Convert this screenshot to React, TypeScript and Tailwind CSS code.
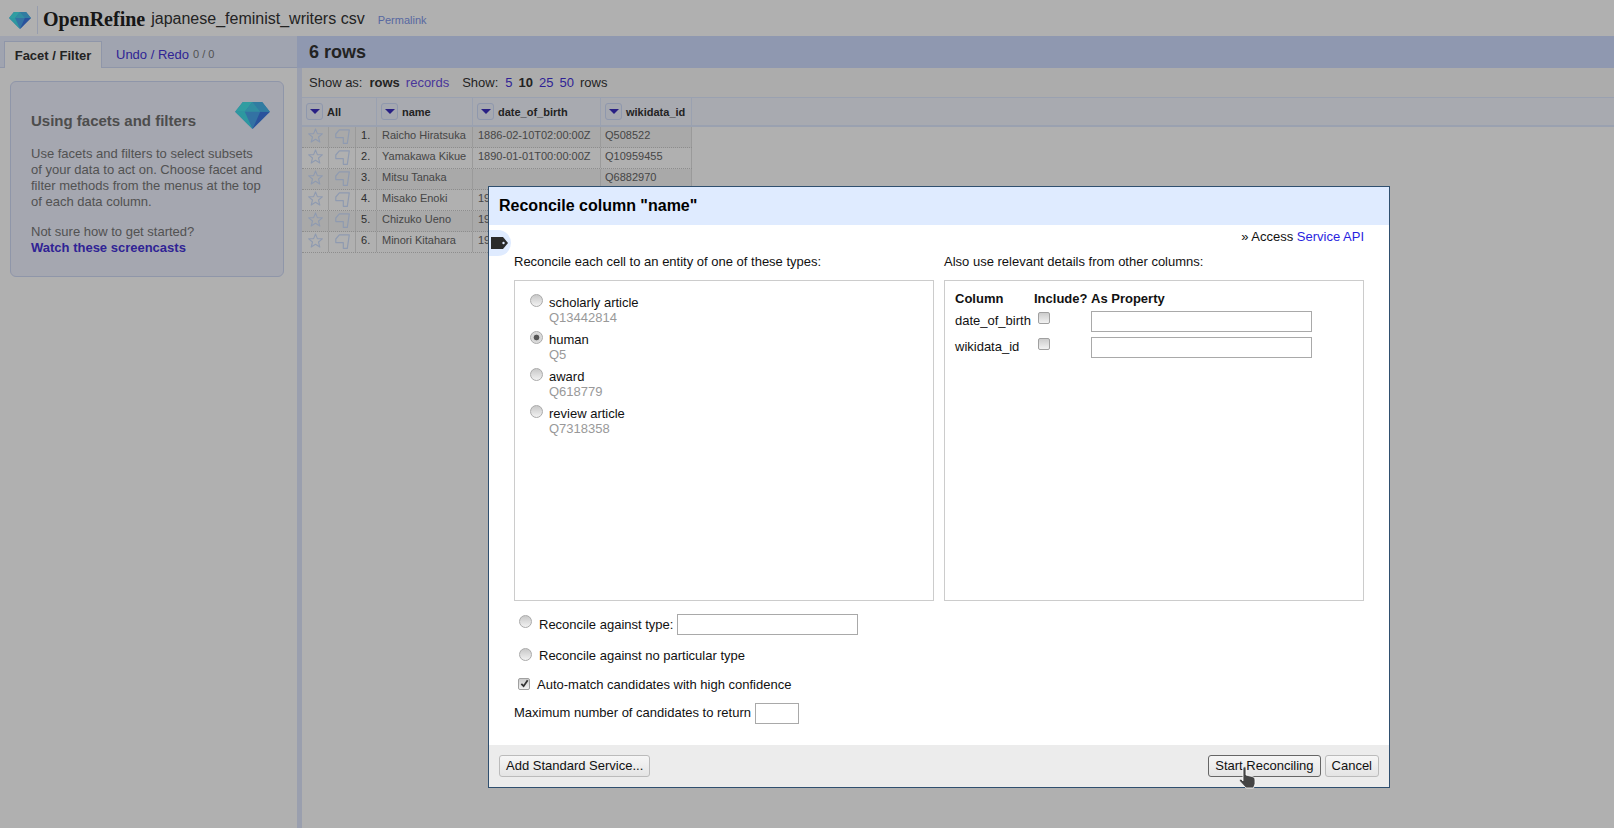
import React from "react";

const font = { fontFamily: '"Liberation Sans", Arial, sans-serif' };

const rows = [
  { name: "Raicho Hiratsuka", date: "1886-02-10T02:00:00Z", id: "Q508522" },
  { name: "Yamakawa Kikue", date: "1890-01-01T00:00:00Z", id: "Q10959455" },
  { name: "Mitsu Tanaka", date: "", id: "Q6882970" },
  { name: "Misako Enoki", date: "19", id: "" },
  { name: "Chizuko Ueno", date: "19", id: "" },
  { name: "Minori Kitahara", date: "19", id: "" },
];

const types = [
  { name: "scholarly article", id: "Q13442814", checked: false },
  { name: "human", id: "Q5", checked: true },
  { name: "award", id: "Q618779", checked: false },
  { name: "review article", id: "Q7318358", checked: false },
];

const Gem = ({ className }: { className: string }) => (
  <svg viewBox="0 0 36 28" className={className}>
    <polygon points="8,0 28,0 36,10 18,28 0,10" fill="#4aa6ec" />
    <polygon points="0,10 10,10 18,28" fill="#42dce8" />
    <polygon points="26,10 36,10 18,28" fill="#3d78e2" />
    <polygon points="8,0 18,0 10,10 0,10" fill="#46e4ea" />
    <polygon points="18,0 28,0 36,10 26,10" fill="#48b4ea" />
    <polygon points="18,0 26,10 10,10" fill="#48cdea" />
  </svg>
);

const Star = () => (
  <svg viewBox="0 0 16 16" className="h-[15px] w-[15px]" fill="none" stroke="#cfe0ff" strokeWidth="1.2" strokeLinejoin="round">
    <polygon points="8,1 10,6 15.3,6.2 11.2,9.6 12.6,15 8,12 3.4,15 4.8,9.6 0.7,6.2 6,6" />
  </svg>
);

const Flag = () => (
  <svg viewBox="0 0 15 15" className="h-[15px] w-[15px]" fill="none" stroke="#cfe0ff" strokeWidth="1.2" strokeLinejoin="round">
    <path d="M0.8 5 L4.3 0.8 H14.3 L12.3 14.3 H8.3 V8.6 H0.8 Z" />
  </svg>
);

const Drop = () => (
  <span className="flex h-[17px] w-[17px] shrink-0 items-center justify-center rounded-[3px] border border-[#cfdcfb] bg-[#f0f3ff]">
    <span className="h-0 w-0 border-x-[5px] border-t-[5px] border-x-transparent border-t-[#3a2fc0]" />
  </span>
);

const Radio = ({ checked = false }: { checked?: boolean }) => (
  <input
    type="radio"
    readOnly
    checked={checked}
    className="h-[13px] w-[13px] shrink-0 appearance-none rounded-full border border-[#aaa] bg-gradient-to-b from-[#c8c8c8] to-[#f2f2f2] checked:bg-[radial-gradient(circle,#555_0,#555_2.5px,#d4d4d4_3.2px,#e8e8e8_100%)]"
  />
);

const Check = () => (
  <input
    type="checkbox"
    readOnly
    className="block h-[12px] w-[12px] appearance-none rounded-[2px] border border-[#a0a0a0] bg-gradient-to-b from-[#cccccc] to-[#f2f2f2]"
  />
);

const Btn = ({ label, active }: { label: string; active?: boolean }) => (
  <button
    className={`h-[22px] rounded-[3px] border bg-gradient-to-b from-[#f6f6f6] to-[#e4e4e4] px-[6px] text-[13px] leading-4 text-[#111] ${
      active ? "border-[#666]" : "border-[#bbb]"
    }`}
  >
    {label}
  </button>
);

const App = () => {
  return (
    <div className="relative h-[828px] w-[1614px] overflow-hidden bg-white text-[13px] text-black" style={font}>
      <header className="flex h-9 items-center pt-[2px]">
        <Gem className="ml-[9px] mt-[3px] h-[17px] w-[22px]" />
        <div className="ml-[6px] mt-[2px] h-7 w-px bg-[#dbe4fb]" />
        <span
          className="ml-[5px] text-[20px] font-bold leading-none text-[#222]"
          style={{ fontFamily: '"Liberation Serif", serif' }}
        >
          OpenRefine
        </span>
        <span className="ml-[6px] text-[16px] text-[#333]">japanese_feminist_writers csv</span>
        <a className="ml-[13px] mt-[2px] text-[11px] text-[#7f97ea]">Permalink</a>
      </header>

      <div className="flex h-[792px]">
        <aside className="w-[297px] shrink-0">
          <div className="flex h-8 items-end border-b border-[#cfd9f5] bg-[#e8eeff] pl-1">
            <div className="relative top-px flex h-[27px] w-[98px] items-center justify-center border border-b-0 border-[#cfd9f5] bg-white pt-px font-bold text-[#333]">
              Facet / Filter
            </div>
            <div className="ml-[14px] flex h-[26px] items-center pt-px text-[#4633d8]">
              Undo / Redo<span className="ml-1 text-[11px] text-[#777]">0 / 0</span>
            </div>
          </div>
          <div className="ml-[10px] mt-[13px] h-[196px] w-[274px] rounded-md border border-[#cfd9f5] bg-[#eff2ff] pl-[20px] pr-[10px] text-[#777]">
            <div className="flex items-start justify-between pr-[3px] pt-[20px]">
              <h2 className="mt-[10px] text-[15px] font-bold leading-[18px] text-[#707070]">Using facets and filters</h2>
              <Gem className="h-[27px] w-[35px]" />
            </div>
            <p className="mt-[16px] leading-4">
              Use facets and filters to select subsets
              <br />
              of your data to act on. Choose facet and
              <br />
              filter methods from the menus at the top
              <br />
              of each data column.
            </p>
            <p className="mt-[14px] leading-4">Not sure how to get started?</p>
            <a className="block font-bold leading-4 text-[#4633d8]">Watch these screencasts</a>
          </div>
        </aside>

        <main className="flex-1 border-l-[5px] border-[#dfe7fd]">
          <div className="-ml-[5px] flex h-8 items-center bg-[#cfdcff] pl-[12px] pt-px text-[18px] font-bold text-[#333]">6 rows</div>
          <div className="flex h-[29px] items-center bg-[#fafafa] pl-[7px] pt-px text-[#333]">
            Show as:
            <b className="ml-[7px]">rows</b>
            <a className="ml-[6px] text-[#6a4fe0]">records</a>
            <span className="ml-[13px]">Show:</span>
            <a className="ml-[7px] text-[#4633d8]">5</a>
            <b className="ml-[6px]">10</b>
            <a className="ml-[6px] text-[#4633d8]">25</a>
            <a className="ml-[6px] text-[#4633d8]">50</a>
            <span className="ml-[6px]">rows</span>
          </div>

          <div className="flex h-[30px] border-y border-b-2 border-[#dfe9ff] bg-[#f4f6ff] text-[11px] font-bold text-[#333]">
            <div className="flex w-[75px] items-center gap-1 border-r border-[#dfe9ff] pl-1"><Drop /><span className="pt-px">All</span></div>
            <div className="flex w-[96px] items-center gap-1 border-r border-[#dfe9ff] pl-1"><Drop /><span className="pt-px">name</span></div>
            <div className="flex w-[128px] items-center gap-1 border-r border-[#dfe9ff] pl-1"><Drop /><span className="pt-px">date_of_birth</span></div>
            <div className="flex w-[91px] items-center gap-1 border-r border-[#dfe9ff] pl-1"><Drop /><span className="pt-px">wikidata_id</span></div>
          </div>
          {rows.map((row, i) => (
            <div
              key={row.name}
              className={`flex h-[21px] w-[390px] border-b border-dotted border-[#ccc] text-[11px] leading-4 text-[#666] ${
                i % 2 === 0 ? "bg-[#f5f5f5]" : "bg-white"
              }`}
            >
              <div className="flex w-[27px] justify-center border-r border-[#e0e0e0] pt-px"><Star /></div>
              <div className="flex w-[27px] justify-center border-r border-[#e0e0e0] pt-[2px]"><Flag /></div>
              <div className="w-[21px] border-r border-[#e0e0e0] pl-[5px] text-[#444]">{i + 1}.</div>
              <div className="w-[96px] border-r border-[#e0e0e0] pl-[5px]">{row.name}</div>
              <div className="w-[128px] border-r border-[#e0e0e0] pl-[5px]">{row.date}</div>
              <div className="w-[91px] border-r border-[#e0e0e0] pl-1">{row.id}</div>
            </div>
          ))}
        </main>
      </div>

      {/* dim layer behind the dialog */}
      <div className="absolute inset-0 bg-black/[0.31]" />

      <div className="absolute left-[488px] top-[186px] flex h-[602px] w-[902px] flex-col border border-[#2f4f6f] bg-white text-[#111]">
        <div className="flex h-[38px] shrink-0 items-center bg-[#dfebff] pl-[10px] text-[16px] font-bold text-black">
          Reconcile column "name"
        </div>
        <div className="absolute left-0 top-[43px] flex h-[26px] w-[22px] items-center rounded-r-[13px] bg-[#dfebff] pl-[2px]">
          <svg viewBox="0 0 17 12" className="h-[12px] w-[17px]">
            <path d="M0 0 H12 L17 6 L12 12 H0 Z" fill="#2a2a2a" />
            <circle cx="12.5" cy="6" r="1.2" fill="#dfebff" />
          </svg>
        </div>

        <div className="flex flex-1 flex-col px-[25px]">
          <div className="mt-1 text-right leading-4">
            » Access <a className="text-[#2a1fe0]">Service API</a>
          </div>
          <div className="mt-[9px] flex gap-[10px]">
            <div className="w-[420px]">
              <div className="leading-4">Reconcile each cell to an entity of one of these types:</div>
              <div className="mt-[10px] h-[321px] border border-[#ccc] pl-[15px] pt-[13px]">
                {types.map((t) => (
                  <div key={t.name} className="flex h-[37px] gap-[6px]">
                    <Radio checked={t.checked} />
                    <div className="pt-[1px] leading-[15px]">
                      {t.name}
                      <div className="text-[#999]">{t.id}</div>
                    </div>
                  </div>
                ))}
              </div>
            </div>
            <div className="w-[420px]">
              <div className="leading-4">Also use relevant details from other columns:</div>
              <div className="mt-[10px] h-[321px] border border-[#ccc] pl-[10px] pt-[10px]">
                <div className="flex h-[16px] font-bold leading-4">
                  <span className="w-[79px]">Column</span>
                  <span className="w-[57px]">Include?</span>
                  <span>As Property</span>
                </div>
                <div className="mt-[4px] flex h-[21px] items-start">
                  <span className="mt-[2px] w-[83px] leading-4">date_of_birth</span>
                  <span className="w-[53px] pt-[1px]"><Check /></span>
                  <input className="h-[21px] w-[221px] border border-[#a9a9a9]" />
                </div>
                <div className="mt-[5px] flex h-[21px] items-start">
                  <span className="mt-[2px] w-[83px] leading-4">wikidata_id</span>
                  <span className="w-[53px] pt-[1px]"><Check /></span>
                  <input className="h-[21px] w-[221px] border border-[#a9a9a9]" />
                </div>
              </div>
            </div>
          </div>

          <div className="ml-[5px] mt-[13px] flex h-[21px] items-center">
            <span className="-mt-[6px] flex"><Radio /></span>
            <span className="ml-[7px]">Reconcile against type:</span>
            <input className="ml-1 h-[21px] w-[181px] border border-[#a9a9a9]" />
          </div>
          <div className="ml-[5px] mt-[13px] flex h-4 items-center">
            <span className="-mt-[3px] flex"><Radio /></span>
            <span className="ml-[7px]">Reconcile against no particular type</span>
          </div>
          <div className="ml-1 mt-[13px] flex h-4 items-center">
            <span className="-mt-[3px] flex h-[12px] w-[12px] items-center justify-center rounded-[2px] border border-[#a0a0a0] bg-gradient-to-b from-[#cccccc] to-[#f2f2f2]">
              <svg viewBox="0 0 10 10" className="h-[9px] w-[9px]">
                <path d="M1.5 5.5 L4 8 L8.5 1.5" fill="none" stroke="#333" strokeWidth="2" />
              </svg>
            </span>
            <span className="ml-[7px]">Auto-match candidates with high confidence</span>
          </div>
          <div className="mt-[10px] flex h-[21px] items-start">
            <span className="mt-[2px] leading-4">Maximum number of candidates to return</span>
            <input className="ml-1 h-[21px] w-[44px] border border-[#a9a9a9]" />
          </div>
        </div>

        <div className="flex h-[42px] shrink-0 items-start justify-between bg-[#ececec] px-[10px] pt-[10px]">
          <Btn label="Add Standard Service..." />
          <div className="flex gap-1">
            <Btn label="Start Reconciling" active />
            <Btn label="Cancel" />
          </div>
        </div>
      </div>

      {/* mouse pointer */}
      <svg viewBox="0 0 18 23" className="absolute left-[1238px] top-[766px] h-[23px] w-[18px]">
        <path
          d="M6 1 C7 0.5 8 1 8 2 V9 L14 10.5 C16 11 17 12 17 14 V18 L15.5 22 H8 L1.5 15 C1 14 2 12.5 3.5 13.5 L5 15 V2 C5 1.5 5.5 1 6 1 Z"
          fill="#444"
          stroke="#fff"
          strokeWidth="0.8"
        />
      </svg>
    </div>
  );
};

export default App;
